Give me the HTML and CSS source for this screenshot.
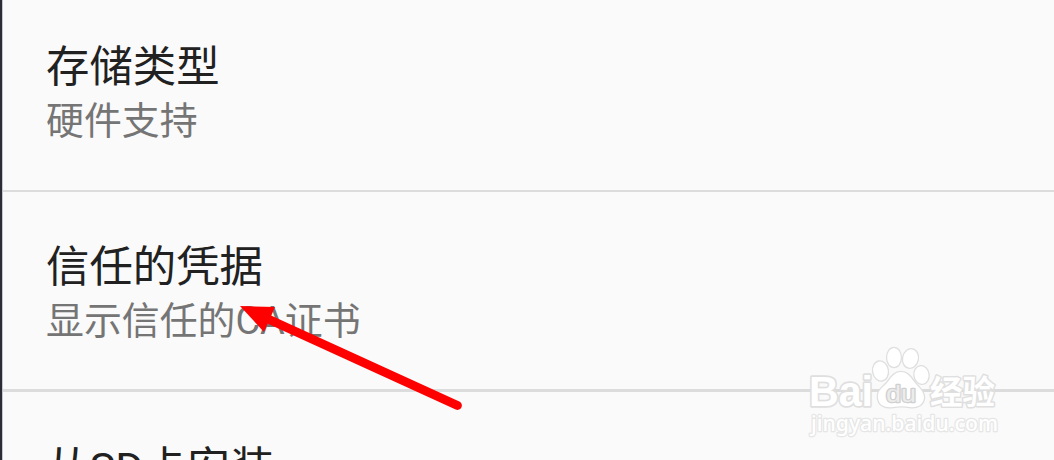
FILE: index.html
```
<!DOCTYPE html>
<html lang="zh-CN">
<head>
    <meta charset="utf-8">
    <title>凭据存储</title>
    <link rel="stylesheet" href="styles.css">
</head>
<body>
    <div class="screen">
        <ul class="list">
            <li class="item">
                <div class="title">存储类型</div>
                <div class="summary">硬件支持</div>
            </li>
            <li class="item">
                <div class="title">信任的凭据</div>
                <div class="summary">显示信任的CA证书</div>
            </li>
            <li class="item">
                <div class="title">从SD卡安装</div>
            </li>
        </ul>

        <svg class="arrow" width="230" height="115" viewBox="0 0 230 115">
            <path d="M27 13.5 L217.5 100.5" stroke="#fe0000" stroke-width="8.8" stroke-linecap="round"/>
            <path d="M0 1 L35 2 L24 27 Z" fill="#fe0000"/>
        </svg>

        <svg class="watermark" width="210" height="100" viewBox="800 342 210 100">
            <g class="mark">
                <ellipse cx="880.5" cy="371" rx="7.3" ry="9.5" transform="rotate(-10 880.5 371)"/>
                <ellipse cx="894" cy="357.5" rx="6.8" ry="9.5"/>
                <ellipse cx="910.5" cy="358.5" rx="7.3" ry="9.3" transform="rotate(12 910.5 358.5)"/>
                <ellipse cx="921.5" cy="375" rx="7" ry="8.8" transform="rotate(-8 921.5 375)"/>
                <path d="M901 372 C894 372 891 378 887 383 C882 388 877 391 878 398 C879 406 886 408 893 407 C899 406 904 406 910 407 C917 408 923 405 924 398 C924 391 919 388 915 383 C911 378 908 372 901 372 Z"/>
                <text class="bai" x="809" y="406" textLength="64" lengthAdjust="spacingAndGlyphs">Bai</text>
                <text class="du" x="886" y="402" textLength="30" lengthAdjust="spacingAndGlyphs">du</text>
                <text class="jingyan" x="930" y="404" textLength="65">经验</text>
                <text class="url" x="811" y="431" textLength="187" lengthAdjust="spacingAndGlyphs">jingyan.baidu.com</text>
            </g>
        </svg>
    </div>
</body>
</html>
```
FILE: styles.css
```
body {
    margin: 0;
    background-color: #fafafa;
    font-family: Roboto, "Noto Sans CJK SC", sans-serif;
}
.screen {
    position: relative;
    box-sizing: border-box;
    height: 460px;
    overflow: hidden;
    border-left: 2px solid #2a2e34;
}
.list {
    margin: 0;
    padding: 0;
    list-style: none;
    border-left: 1px solid #c6c7c8;
}
.item {
    box-sizing: border-box;
    height: 200px;
    padding: 49px 0 0 43px;
    border-bottom: 3px solid #dcdcdc;
}
.item:first-child {
    height: 192px;
    padding-top: 41px;
    border-bottom-width: 2px;
}
.item:last-child {
    padding-top: 50px;
    border-bottom: 0;
}
.title {
    font-size: 43.4px;
    line-height: 54px;
    color: #212121;
}
.summary {
    margin-top: -1px;
    font-size: 37.9px;
    line-height: 54px;
    color: #757575;
}
.arrow {
    position: absolute;
    left: 238px;
    top: 305px;
}
.watermark {
    position: absolute;
    left: 798px;
    top: 342px;
}
.mark {
    fill: #fff;
    stroke: #dfdfdf;
    stroke-width: 2.6px;
    stroke-linejoin: round;
    paint-order: stroke;
    font-weight: bold;
}
.bai {
    font-family: "Liberation Sans", sans-serif;
    font-size: 43px;
    stroke-width: 3.5px;
}
.du {
    font-family: "Liberation Sans", sans-serif;
    font-size: 24px;
    font-weight: normal;
    fill: #ececec;
    stroke: #d0d0d0;
    stroke-width: 2.6px;
}
.jingyan {
    font-family: "Noto Sans CJK SC", sans-serif;
    font-size: 32.5px;
    stroke-width: 3px;
}
.url {
    font-family: "Noto Sans", sans-serif;
    font-size: 22px;
    font-weight: 500;
    stroke: #e6e6e6;
}
```
